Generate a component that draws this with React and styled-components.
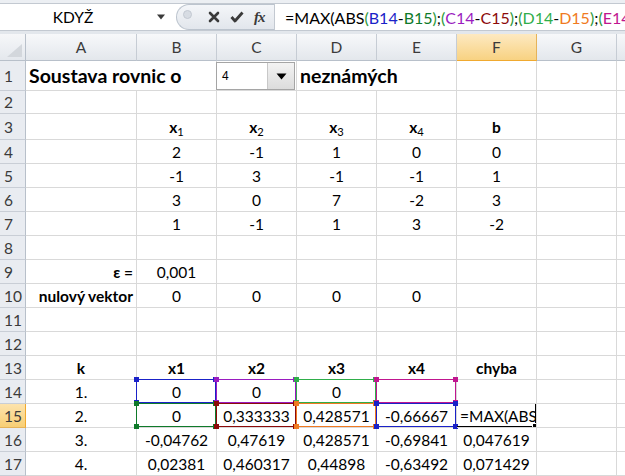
import React from 'react';
import styled, { createGlobalStyle } from 'styled-components';

const GlobalStyle = createGlobalStyle`
  html, body {
    margin: 0;
    padding: 0;
    background: #fff;
    overflow: hidden;
  }
  body {
    font-family: Lato, "Open Sans", sans-serif;
    color: #000;
  }
`;

const C = {
  blue: '#1a22c8',
  green: '#0f7a2a',
  purple: '#9a1cc0',
  maroon: '#8c0a0a',
  lime: '#2fae4a',
  orange: '#f07a22',
  magenta: '#c0168f',
  paren: '#2f9a3c',
};

const Window = styled.div`
  width: 625px;
  height: 476px;
  overflow: hidden;
  background: #dfe3e9;
  display: flex;
  flex-direction: column;
`;

const TopStrip = styled.div`
  height: 3px;
  background: #eceff3;
  border-bottom: 1px solid #c3c9d1;
`;

const FormulaBar = styled.div`
  height: 26px;
  display: flex;
  border-bottom: 1px solid #c3c9d1;
  background: #fff;
`;

const NameBox = styled.div`
  width: 172px;
  display: flex;
  align-items: center;
  background: #fff;
  font-size: 15.5px;
  span {
    flex: 1;
    text-align: center;
    padding-right: 10px;
  }
`;

const Splitter = styled.div`
  width: 4px;
  background: #fff;
`;

const ButtonGroup = styled.div`
  width: 98px;
  display: flex;
  align-items: center;
  gap: 10px;
  padding-left: 6px;
  box-sizing: border-box;
  background: linear-gradient(#f4f6f9, #e2e6ec);
  border: 1px solid #bcc4ce;
  border-right: none;
  border-radius: 13px 0 0 13px;
`;

const Grip = styled.div`
  width: 7px;
  height: 7px;
  border-radius: 50%;
  background: #d7dce3;
  border: 1px solid #c3c9d2;
  margin-right: 6px;
  margin-top: -6px;
`;

const Fx = styled.span`
  font-family: "Liberation Serif", serif;
  font-style: italic;
  font-weight: bold;
  font-size: 15px;
  color: #3a3a3a;
  letter-spacing: -1px;
`;

const FormulaInput = styled.div`
  flex: 1;
  display: flex;
  align-items: center;
  padding-left: 10px;
  border-left: 1px solid #c3c9d1;
  background: #fff;
  font-size: 16px;
  white-space: nowrap;
  overflow: hidden;
`;

const Tok = styled.span`
  color: ${(p) => p.$c || '#000'};
`;

const Gap = styled.div`
  height: 3px;
  background: #e3e7ec;
`;

const Sheet = styled.div`
  display: grid;
  grid-template-columns: 26px 111px repeat(7, 80px);
  grid-template-rows: 27px 30px 23px 26px repeat(14, 24px);
  background: #fff;
  font-size: 15.5px;
`;

const Corner = styled.div`
  position: relative;
  background: linear-gradient(#f6f7f9, #e4e8ed);
  border-right: 1px solid #b8c0ca;
  border-bottom: 1px solid #b8c0ca;
  box-sizing: border-box;
  &::after {
    content: '';
    position: absolute;
    right: 3px;
    bottom: 3px;
    width: 15px;
    height: 13px;
    background: #d3d7dc;
    clip-path: polygon(100% 0, 100% 100%, 0 100%);
  }
`;

const ColHeader = styled.div`
  display: flex;
  align-items: center;
  justify-content: center;
  box-sizing: border-box;
  color: #3b3b3b;
  background: ${(p) =>
    p.$sel ? 'linear-gradient(#fde9c1, #f8d282)' : 'linear-gradient(#f7f8fa, #e3e7ec)'};
  border-right: 1px solid ${(p) => (p.$sel ? '#e5b35a' : '#c6ccd4')};
  border-bottom: 1px solid ${(p) => (p.$sel ? '#f0a92f' : '#b8c0ca')};
`;

const RowHeader = styled.div`
  display: flex;
  align-items: center;
  padding-left: 4px;
  box-sizing: border-box;
  color: #3b3b3b;
  background: ${(p) => (p.$sel ? 'linear-gradient(#fde3ad, #f8cf75)' : '#e9ecf1')};
  border-right: 1px solid ${(p) => (p.$sel ? '#f0a92f' : '#b8c0ca')};
  border-bottom: 1px solid ${(p) => (p.$sel ? '#e5b35a' : '#c9ced6')};
`;

const Cell = styled.div`
  position: relative;
  display: flex;
  align-items: center;
  justify-content: ${(p) =>
    p.$align === 'left' ? 'flex-start' : p.$align === 'right' ? 'flex-end' : 'center'};
  padding: 0 3px;
  box-sizing: border-box;
  border-right: 1px solid #d9d9d9;
  border-bottom: 1px solid #d9d9d9;
  font-weight: ${(p) => (p.$bold ? 700 : 400)};
  font-size: ${(p) => (p.$big ? '19.5px' : 'inherit')};
  white-space: nowrap;
  grid-column: span ${(p) => p.$span || 1};
  overflow: ${(p) => (p.$clip ? 'hidden' : 'visible')};
  z-index: ${(p) => (p.$active ? 3 : p.$range ? 2 : 'auto')};
`;

const Var = styled.span`
  sub {
    font-size: 0.72em;
    font-weight: 400;
    vertical-align: -0.3em;
    line-height: 0;
  }
`;

const RangeBox = styled.div`
  position: absolute;
  left: -1px;
  top: -1px;
  right: 0;
  bottom: 0;
  border: 1px solid ${(p) => p.$c};
  pointer-events: none;
`;

const Handle = styled.div`
  position: absolute;
  width: 5px;
  height: 5px;
  background: ${(p) => p.$c};
  left: ${(p) => (p.$x ? 'auto' : '-3px')};
  right: ${(p) => (p.$x ? '-3px' : 'auto')};
  top: ${(p) => (p.$y ? 'auto' : '-3px')};
  bottom: ${(p) => (p.$y ? '-3px' : 'auto')};
`;

const ActiveBox = styled.div`
  position: absolute;
  left: -2px;
  top: -2px;
  right: -1px;
  bottom: -1px;
  border: 2px solid #000;
  border-left-color: #e8d200;
  pointer-events: none;
`;

const FillHandle = styled.div`
  position: absolute;
  right: -4px;
  bottom: -4px;
  width: 5px;
  height: 5px;
  background: #000;
  border: 1px solid #fff;
`;

const Combo = styled.div`
  flex: 1;
  align-self: stretch;
  margin: 1px -2px 0 -4px;
  display: flex;
  border: 1px solid #a5a5a5;
  background: #fff;
  font-size: 12px;
  font-family: "Liberation Sans", Arial, sans-serif;
  font-weight: 400;
`;

const ComboText = styled.div`
  flex: 1;
  display: flex;
  align-items: center;
  padding-left: 5px;
`;

const ComboButton = styled.div`
  width: 26px;
  display: flex;
  align-items: center;
  justify-content: center;
  background: linear-gradient(#f3f3f3, #dcdcdc);
  border-left: 1px solid #c8c8c8;
`;

function RangeFrame({ c }) {
  return (
    <RangeBox $c={c}>
      <Handle $c={c} />
      <Handle $c={c} $x />
      <Handle $c={c} $y />
      <Handle $c={c} $x $y />
    </RangeBox>
  );
}

const X = (n) => (
  <Var>
    x<sub>{n}</sub>
  </Var>
);

const cols = ['A', 'B', 'C', 'D', 'E', 'F', 'G', 'H'];

// row number -> cells keyed by column
const rows = [
  {
    n: 1,
    cells: {
      A: { t: 'Soustava rovnic o', bold: true, big: true, align: 'left', span: 2 },
      C: { combo: true },
      D: { t: 'neznámých', bold: true, big: true, align: 'left', span: 2 },
    },
  },
  { n: 2, cells: {} },
  {
    n: 3,
    cells: {
      B: { t: X(1), bold: true },
      C: { t: X(2), bold: true },
      D: { t: X(3), bold: true },
      E: { t: X(4), bold: true },
      F: { t: 'b', bold: true },
    },
  },
  { n: 4, vals: ['2', '-1', '1', '0', '0'] },
  { n: 5, vals: ['-1', '3', '-1', '-1', '1'] },
  { n: 6, vals: ['3', '0', '7', '-2', '3'] },
  { n: 7, vals: ['1', '-1', '1', '3', '-2'] },
  { n: 8, cells: {} },
  { n: 9, cells: { A: { t: 'ε =', bold: true, align: 'right' }, B: { t: '0,001' } } },
  {
    n: 10,
    cells: {
      A: { t: 'nulový vektor', bold: true, align: 'right' },
      B: { t: '0' },
      C: { t: '0' },
      D: { t: '0' },
      E: { t: '0' },
    },
  },
  { n: 11, cells: {} },
  { n: 12, cells: {} },
  {
    n: 13,
    cells: {
      A: { t: 'k', bold: true },
      B: { t: 'x1', bold: true },
      C: { t: 'x2', bold: true },
      D: { t: 'x3', bold: true },
      E: { t: 'x4', bold: true },
      F: { t: 'chyba', bold: true },
    },
  },
  {
    n: 14,
    cells: {
      A: { t: '1.' },
      B: { t: '0', range: C.blue },
      C: { t: '0', range: C.purple },
      D: { t: '0', range: C.lime },
      E: { t: '', range: C.magenta },
    },
  },
  {
    n: 15,
    sel: true,
    cells: {
      A: { t: '2.' },
      B: { t: '0', range: C.green },
      C: { t: '0,333333', range: C.maroon },
      D: { t: '0,428571', range: C.orange },
      E: { t: '-0,66667', range: C.blue },
      F: { t: '=MAX(ABS', align: 'left', active: true, clip: true },
    },
  },
  {
    n: 16,
    cells: {
      A: { t: '3.' },
      B: { t: '-0,04762' },
      C: { t: '0,47619' },
      D: { t: '0,428571' },
      E: { t: '-0,69841' },
      F: { t: '0,047619' },
    },
  },
  {
    n: 17,
    cells: {
      A: { t: '4.' },
      B: { t: '0,02381' },
      C: { t: '0,460317' },
      D: { t: '0,44898' },
      E: { t: '-0,63492' },
      F: { t: '0,071429' },
    },
  },
];

function rowCells(row) {
  if (row.vals) {
    const out = {};
    row.vals.forEach((v, i) => (out[cols[i + 1]] = { t: v }));
    return out;
  }
  return row.cells;
}

const formula = [
  ['=MAX(ABS'],
  ['(', C.paren],
  ['B14', C.blue],
  ['-'],
  ['B15', C.green],
  [')', C.paren],
  [';'],
  ['(', C.paren],
  ['C14', C.purple],
  ['-'],
  ['C15', C.maroon],
  [')', C.paren],
  [';'],
  ['(', C.paren],
  ['D14', C.lime],
  ['-'],
  ['D15', C.orange],
  [')', C.paren],
  [';'],
  ['(', C.paren],
  ['E14', C.magenta],
  ['-'],
  ['E15', C.blue],
  [')', C.paren],
  [')'],
];

export default function App() {
  return (
    <>
      <GlobalStyle />
      <Window>
        <TopStrip />
        <FormulaBar>
          <NameBox>
            <span>KDYŽ</span>
            <svg width="10" height="6" viewBox="0 0 10 6" style={{ marginRight: 6 }}>
              <path d="M1 0.5 L9 0.5 L5 5.5 Z" fill="#3a3a3a" />
            </svg>
          </NameBox>
          <Splitter />
          <ButtonGroup>
            <Grip />
            <svg width="12" height="12" viewBox="0 0 12 12">
              <path d="M2 2 L10 10 M10 2 L2 10" stroke="#3a3a3a" strokeWidth="2.6" strokeLinecap="round" />
            </svg>
            <svg width="14" height="12" viewBox="0 0 14 12">
              <path d="M1.5 6 L5 10 L12.5 1.5" stroke="#3a3a3a" strokeWidth="2.8" fill="none" strokeLinejoin="round" />
            </svg>
            <Fx>fx</Fx>
          </ButtonGroup>
          <FormulaInput>
            {formula.map(([s, c], i) => (
              <Tok key={i} $c={c}>
                {s}
              </Tok>
            ))}
          </FormulaInput>
        </FormulaBar>
        <Gap />
        <Sheet>
          <Corner />
          {cols.map((c) => (
            <ColHeader key={c} $sel={c === 'F'}>
              {c}
            </ColHeader>
          ))}
          {rows.map((row) => {
            const cells = rowCells(row);
            const out = [
              <RowHeader key={'h' + row.n} $sel={row.sel}>
                {row.n}
              </RowHeader>,
            ];
            let skip = 0;
            cols.forEach((c) => {
              if (skip > 0) {
                skip--;
                return;
              }
              const d = cells[c] || {};
              if (d.span) skip = d.span - 1;
              out.push(
                <Cell
                  key={row.n + c}
                  $align={d.align}
                  $bold={d.bold}
                  $big={d.big}
                  $span={d.span}
                  $range={d.range}
                  $active={d.active}
                  $clip={d.clip}
                >
                  {d.combo ? (
                    <Combo>
                      <ComboText>4</ComboText>
                      <ComboButton>
                        <svg width="11" height="7" viewBox="0 0 11 7">
                          <path d="M0.5 0.5 L10.5 0.5 L5.5 6.5 Z" fill="#000" />
                        </svg>
                      </ComboButton>
                    </Combo>
                  ) : (
                    d.t
                  )}
                  {d.range && <RangeFrame c={d.range} />}
                  {d.active && (
                    <ActiveBox>
                      <FillHandle />
                    </ActiveBox>
                  )}
                </Cell>
              );
            });
            return out;
          })}
        </Sheet>
      </Window>
    </>
  );
}
